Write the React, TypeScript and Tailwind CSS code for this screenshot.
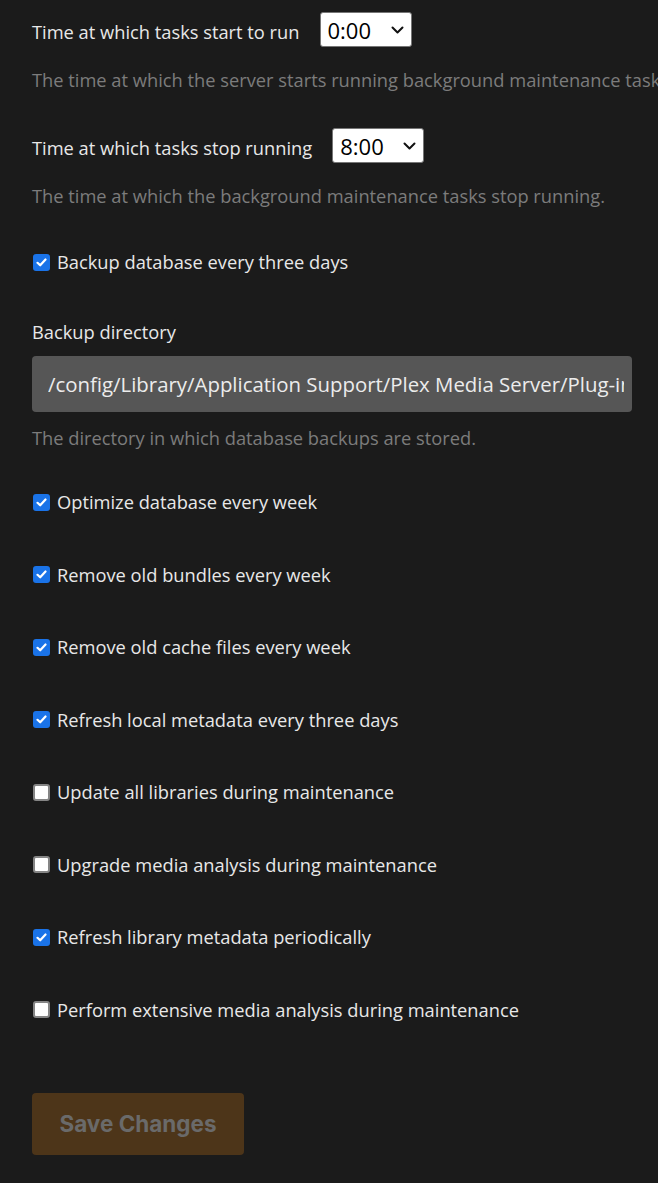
import { useState } from 'react'

const tasks: { label: string; on: boolean }[] = [
  { label: 'Optimize database every week', on: true },
  { label: 'Remove old bundles every week', on: true },
  { label: 'Remove old cache files every week', on: true },
  { label: 'Refresh local metadata every three days', on: true },
  { label: 'Update all libraries during maintenance', on: false },
  { label: 'Upgrade media analysis during maintenance', on: false },
  { label: 'Refresh library metadata periodically', on: true },
  { label: 'Perform extensive media analysis during maintenance', on: false },
]

function TimeSelect({ value }: { value: string }) {
  return (
    <div className="flex h-[35px] w-[92px] items-center justify-between rounded-[3px] border border-[#767676] bg-white pl-[7px] pr-[7px] text-[22px] text-black">
      <span>{value}</span>
      <svg width="13" height="8" viewBox="0 0 13 8" fill="none" stroke="#111" strokeWidth="2" strokeLinecap="round" strokeLinejoin="round">
        <path d="M1.5 1.5 6.5 6.5 11.5 1.5" />
      </svg>
    </div>
  )
}

function Check({ label, on }: { label: string; on: boolean }) {
  const [checked, setChecked] = useState(on)
  return (
    <label className="flex h-6 cursor-pointer items-center text-[18.3px] text-[#e8e8e8]" onClick={() => setChecked(!checked)}>
      {checked ? (
        <span className="ml-[1px] mr-[7px] flex h-[17px] w-[17px] items-center justify-center rounded-[3px] bg-[#1a73e8]">
          <svg width="11" height="9" viewBox="0 0 11 9" fill="none" stroke="white" strokeWidth="2.2" strokeLinecap="round" strokeLinejoin="round">
            <path d="M1.5 4.8 4.2 7.3 9.5 1.5" />
          </svg>
        </span>
      ) : (
        <span className="ml-[1px] mr-[7px] h-[17px] w-[17px] rounded-[3px] border-2 border-[#858585] bg-white" />
      )}
      {label}
    </label>
  )
}

export default function App() {
  return (
    <div className="min-h-screen overflow-hidden whitespace-nowrap bg-[#1b1b1b] pl-8 pt-[12px] pb-[28px] font-['Open_Sans',sans-serif] leading-6">
      <div className="flex items-center text-[18.3px] text-[#e8e8e8]">
        <span className="mt-[4px]">Time at which tasks start to run</span>
        <div className="ml-[20px]"><TimeSelect value="0:00" /></div>
      </div>
      <p className="mt-[21px] text-[18.3px] text-[#7c7c7c]">The time at which the server starts running background maintenance tasks.</p>

      <div className="mt-[36px] flex items-center text-[18.3px] text-[#e8e8e8]">
        <span className="mt-[4px]">Time at which tasks stop running</span>
        <div className="ml-[20px]"><TimeSelect value="8:00" /></div>
      </div>
      <p className="mt-[21px] text-[18.3px] text-[#7c7c7c]">The time at which the background maintenance tasks stop running.</p>

      <div className="mt-[42px]"><Check label="Backup database every three days" on /></div>

      <p className="mt-[46px] text-[18.3px] text-[#e8e8e8]">Backup directory</p>
      <input
        readOnly
        value="/config/Library/Application Support/Plex Media Server/Plug-in Support/Databases"
        className="mt-[12px] block h-[56px] w-[600px] rounded-[4px] bg-[#565656] pl-4 pr-2 text-[20.4px] text-[#ececec] outline-none"
      />
      <p className="mt-[14px] text-[18.3px] text-[#7c7c7c]">The directory in which database backups are stored.</p>

      <div className="mt-[40px] flex flex-col gap-[48.5px]">
        {tasks.map((t) => <Check key={t.label} label={t.label} on={t.on} />)}
      </div>

      <button className="mt-[71px] h-[62px] w-[212px] rounded-[4px] bg-[#4d3519] font-['Inter',sans-serif] text-[22.5px] font-bold text-[#6a6a6a]">
        Save Changes
      </button>
    </div>
  )
}
